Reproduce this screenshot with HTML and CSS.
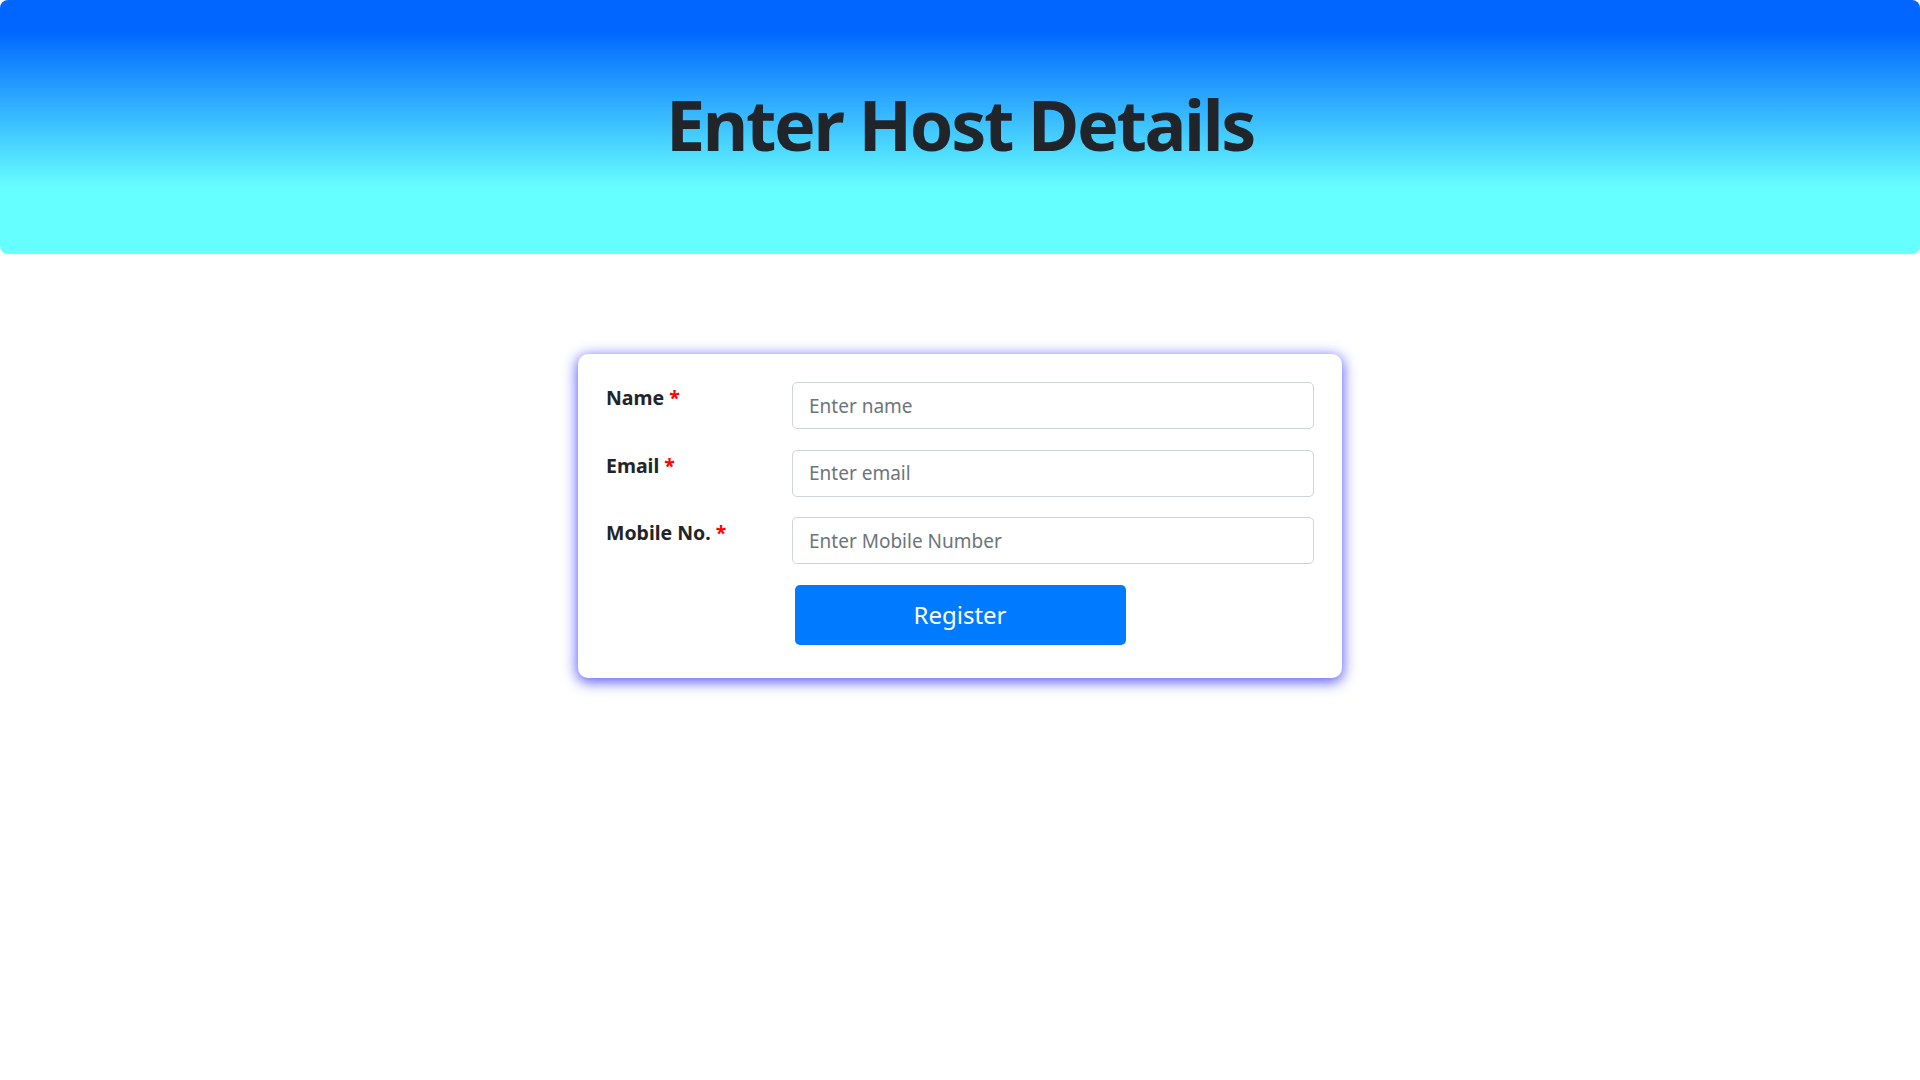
FILE: index.html
```html
<!DOCTYPE html>
<html lang="en">
<head>
<meta charset="utf-8">
<title>Enter Host Details</title>
<link rel="stylesheet" href="styles.css">
</head>
<body>
<header class="banner">
  <h1 class="banner-title">Enter Host Details</h1>
</header>
<main class="content">
  <form class="card">
    <div class="row">
      <label class="label" for="name">Name <span class="req">*</span></label>
      <input class="field" id="name" type="text" placeholder="Enter name">
    </div>
    <div class="row">
      <label class="label" for="email">Email <span class="req">*</span></label>
      <input class="field" id="email" type="email" placeholder="Enter email">
    </div>
    <div class="row">
      <label class="label" for="mobile">Mobile No. <span class="req">*</span></label>
      <input class="field" id="mobile" type="text" placeholder="Enter Mobile Number">
    </div>
    <div class="actions">
      <button class="btn" type="button">Register</button>
    </div>
  </form>
</main>
</body>
</html>
```
FILE: styles.css
```css
* { box-sizing: border-box; }
html, body { margin: 0; padding: 0; background: #fff; }
body {
  font-family: "Noto Sans", "Open Sans", sans-serif;
  color: #212529;
  min-height: 100vh;
}
.banner {
  height: 254px;
  border-radius: 8px;
  background: linear-gradient(180deg, #0066ff 0%, #0066ff 12%, #66ffff 74%, #66ffff 100%);
  display: flex;
  justify-content: center;
  padding-top: 82px;
}
.banner-title {
  margin: 0;
  font-size: 70px;
  line-height: 84px;
  font-weight: 700;
  color: #212529;
  letter-spacing: -2.3px;
}
.content {
  display: flex;
  justify-content: center;
  align-items: flex-start;
  padding: 100px 0 80px;
}
.card {
  width: 764px;
  background: #fff;
  border-radius: 10px;
  box-shadow: 0 3px 14px 1px rgba(60, 60, 255, 0.85);
  padding: 28px 28px 33px 28px;
  display: flex;
  flex-direction: column;
  gap: 20.5px;
}
.row {
  display: flex;
  align-items: flex-start;
}
.label {
  width: 186px;
  flex: none;
  font-size: 19.5px;
  font-weight: 700;
  line-height: 26px;
  padding-top: 3px;
  color: #212529;
}
.req { color: #ff0000; font-weight: 700; }
.field {
  flex: 1;
  height: 47px;
  border: 1px solid #ced4da;
  border-radius: 5px;
  padding: 0 16px;
  font-family: inherit;
  font-size: 19px;
  color: #495057;
  background: #fff;
  outline: none;
}
.field::placeholder { color: #6c757d; opacity: 1; }
.actions {
  display: flex;
  justify-content: center;
}
.btn {
  width: 331px;
  height: 60px;
  border: none;
  border-radius: 5px;
  background: #007bff;
  color: #fff;
  font-family: inherit;
  font-size: 24px;
  cursor: pointer;
}
```
